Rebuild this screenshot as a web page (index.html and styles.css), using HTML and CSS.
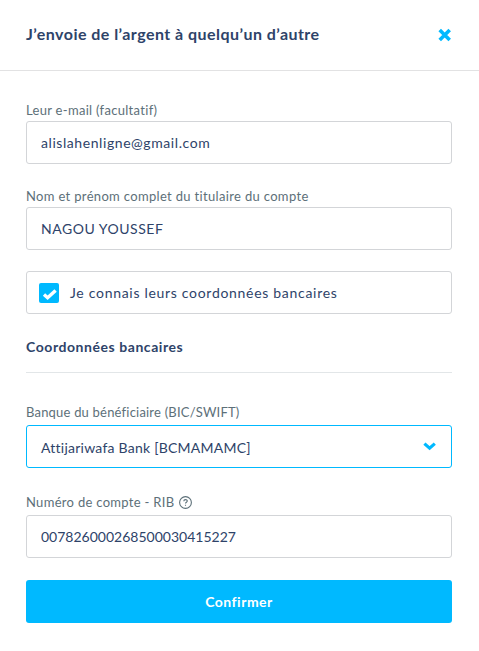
FILE: index.html
```html
<!DOCTYPE html>
<html lang="fr">
<head>
    <meta charset="UTF-8">
    <meta name="viewport" content="width=device-width, initial-scale=1.0">
    <title>Ajouter un bénéficiaire</title>
    <link rel="stylesheet" href="styles.css">
</head>
<body>
    <div class="modal-header">
        <h1 class="modal-title">J’envoie de l’argent à quelqu’un d’autre</h1>
        <button class="close-button" aria-label="Fermer">
            <svg width="14" height="14" viewBox="0 0 14 14"><path d="M1.7 2.1L11.7 12.1M11.7 2.1L1.7 12.1" /></svg>
        </button>
    </div>

    <form class="modal-body">
        <label class="label label-email" for="email">Leur e-mail (facultatif)</label>
        <input class="field field-email" type="text" id="email" value="alislahenligne@gmail.com">

        <label class="label label-name" for="name">Nom et prénom complet du titulaire du compte</label>
        <input class="field field-name" type="text" id="name" value="NAGOU YOUSSEF">

        <div class="field check-row">
            <span class="checkbox">
                <svg width="20" height="20" viewBox="0 0 20 20"><path d="M5 11.6L8.6 14.8L16.6 7.4" /></svg>
            </span>
            <span class="check-text">Je connais leurs coordonnées bancaires</span>
        </div>

        <h2 class="section-title"><span>Coordonnées bancaires</span></h2>

        <div class="label label-bank">Banque du bénéficiaire (BIC/SWIFT)</div>
        <div class="field select">
            <span>Attijariwafa Bank [BCMAMAMC]</span>
            <svg class="chevron" width="14" height="10" viewBox="0 0 14 10"><path d="M1.4 2.6L6.6 7.2L11.8 2.6" /></svg>
        </div>

        <label class="label label-rib" for="rib">
            <span>Numéro de compte - RIB</span>
            <svg class="help" width="13" height="13" viewBox="0 0 13 13">
                <circle cx="6.5" cy="6.5" r="5.9" />
                <path d="M4.8 5.2C4.8 3.1 8.3 3.1 8.3 5.1C8.3 6.3 6.5 6.2 6.5 7.6M6.5 8.7V9.8" />
            </svg>
        </label>
        <input class="field field-rib" type="text" id="rib" value="007826000268500030415227">

        <button class="confirm-button" type="button">Confirmer</button>
    </form>
</body>
</html>
```
FILE: styles.css
```css
* {
    box-sizing: border-box;
}
body {
    margin: 0;
    background-color: #fff;
    color: #2e4369;
    font-family: Lato, "Open Sans", sans-serif;
    font-size: 14px;
}
.modal-header {
    display: flex;
    align-items: center;
    justify-content: space-between;
    height: 71px;
    padding: 0 27px 0 26px;
    border-bottom: 1px solid #e2e2e3;
}
.modal-title {
    margin: 0;
    padding-bottom: 2px;
    font-size: 16px;
    font-weight: bold;
    line-height: 20px;
    letter-spacing: 0.46px;
    white-space: nowrap;
}
.close-button {
    display: flex;
    padding: 0;
    border: none;
    background: none;
    cursor: pointer;
}
.close-button path {
    fill: none;
    stroke: #00b9ff;
    stroke-width: 3.6;
}
.modal-body {
    display: flex;
    flex-direction: column;
    padding: 31px 27px 28px 26px;
}
.label {
    display: flex;
    align-items: center;
    height: 19px;
    padding-bottom: 3px;
    color: #5d7079;
    font-size: 13px;
    white-space: nowrap;
    letter-spacing: 0.3px;
}
.field {
    width: 100%;
    height: 43px;
    padding: 0 14px;
    border: 1px solid #d3d5d8;
    border-radius: 3px;
    background-color: #fff;
    color: #2e4369;
    font-family: inherit;
    font-size: 14px;
    letter-spacing: 0.52px;
    outline: none;
    white-space: nowrap;
}
.field-email,
.field-name {
    margin-bottom: 21px;
}
.field-email {
    letter-spacing: 0.57px;
}
.label-name {
    margin-top: 3px;
    letter-spacing: 0.33px;
}
.check-row {
    display: flex;
    align-items: center;
    gap: 11px;
    padding-left: 12px;
    letter-spacing: 0.7px;
}
.checkbox {
    display: flex;
    width: 20px;
    height: 20px;
    border-radius: 2px;
    background-color: #00b9ff;
}
.checkbox path {
    fill: none;
    stroke: #fff;
    stroke-width: 3.4;
}
.section-title {
    display: flex;
    align-items: center;
    height: 59px;
    margin: 0 0 30px;
    padding-top: 6px;
    border-bottom: 1px solid #e2e6e8;
    font-size: 14px;
    font-weight: bold;
    letter-spacing: 0.56px;
}
.label-bank {
    height: 22px;
    padding-bottom: 4px;
    letter-spacing: 0.2px;
}
.select {
    display: flex;
    align-items: center;
    justify-content: space-between;
    padding-top: 1px;
    border-color: #00b9ff;
    letter-spacing: 0.24px;
}
.chevron {
    margin: -3px 0 0;
}
.chevron path {
    fill: none;
    stroke: #00b9ff;
    stroke-width: 3.2;
}
.label-rib {
    gap: 5px;
    margin-top: 24px;
    height: 23px;
}
.field-rib {
    letter-spacing: 0;
}
.help {
    fill: none;
    stroke: #5d7079;
    stroke-width: 1.1;
}
.confirm-button {
    height: 43px;
    margin-top: 22px;
    border: none;
    border-radius: 3px;
    background-color: #00b9ff;
    color: #fff;
    font-family: inherit;
    font-size: 14px;
    font-weight: bold;
    letter-spacing: 0.5px;
    cursor: pointer;
}
```
